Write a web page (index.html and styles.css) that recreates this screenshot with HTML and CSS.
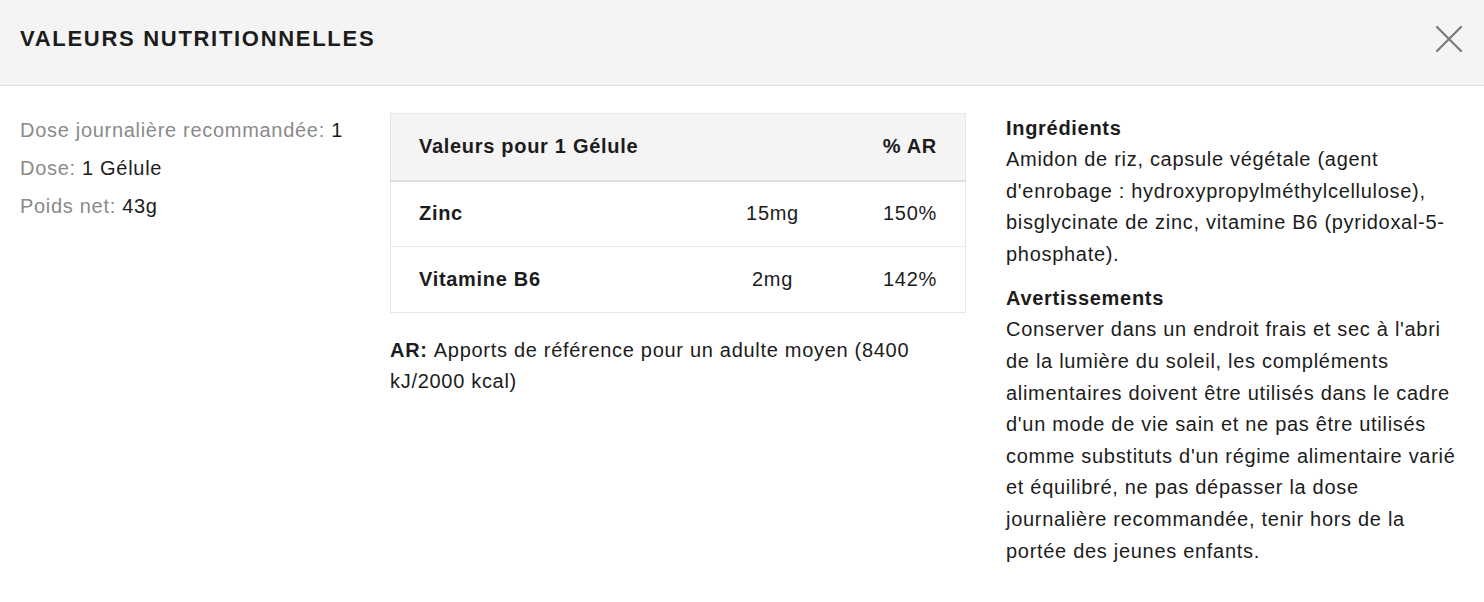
FILE: index.html
```html
<!DOCTYPE html>
<html lang="fr">
<head>
<meta charset="utf-8">
<title>Valeurs nutritionnelles</title>
<link rel="stylesheet" href="styles.css">
</head>
<body>
<div class="modal">
  <header class="modal-header">
    <h1 class="modal-title">VALEURS NUTRITIONNELLES</h1>
    <button class="close" aria-label="Fermer">
      <svg width="28" height="28" viewBox="0 0 28 28"><path d="M2 2 L26 26 M26 2 L2 26" stroke="#7a7a7a" stroke-width="2.2" fill="none" stroke-linecap="round"/></svg>
    </button>
  </header>
  <div class="modal-body">
    <div class="facts">
      <div class="fact"><span class="label">Dose journalière recommandée:</span> 1</div>
      <div class="fact"><span class="label">Dose:</span> 1 Gélule</div>
      <div class="fact"><span class="label">Poids net:</span> 43g</div>
    </div>
    <div class="nutri">
      <table class="ntable">
        <thead>
          <tr><th class="c-name">Valeurs pour 1 Gélule</th><th class="c-qty"></th><th class="c-ar">% AR</th></tr>
        </thead>
        <tbody>
          <tr><td class="c-name">Zinc</td><td class="c-qty">15mg</td><td class="c-ar">150%</td></tr>
          <tr><td class="c-name">Vitamine B6</td><td class="c-qty">2mg</td><td class="c-ar">142%</td></tr>
        </tbody>
      </table>
      <p class="note"><strong class="note-key">AR:</strong> Apports de référence pour un adulte moyen (8400 kJ/2000 kcal)</p>
    </div>
    <div class="info">
      <h2 class="info-title">Ingrédients</h2>
      <p class="info-text">Amidon de riz, capsule végétale (agent d'enrobage : hydroxypropylméthylcellulose), bisglycinate de zinc, vitamine B6 (pyridoxal-5-phosphate).</p>
      <h2 class="info-title">Avertissements</h2>
      <p class="info-text">Conserver dans un endroit frais et sec à l'abri de la lumière du soleil, les compléments alimentaires doivent être utilisés dans le cadre d'un mode de vie sain et ne pas être utilisés comme substituts d'un régime alimentaire varié et équilibré, ne pas dépasser la dose journalière recommandée, tenir hors de la portée des jeunes enfants.</p>
    </div>
  </div>
</div>
</body>
</html>
```

FILE: styles.css
```css
* { box-sizing: border-box; }
html, body { margin: 0; padding: 0; background: #fff; }
body {
  font-family: "Liberation Sans", Arial, Helvetica, sans-serif;
  color: #1c1c1c;
  font-size: 20px;
  letter-spacing: 0.7px;
}
.modal-header {
  height: 86px;
  background: #f4f4f4;
  border-bottom: 1px solid #dcdcdc;
  display: flex;
  align-items: center;
  justify-content: space-between;
  padding: 0 20px 7px;
}
.modal-title {
  margin: 0;
  font-size: 22px;
  font-weight: bold;
  color: #1c1c1c;
  letter-spacing: 1.7px;
}
.close {
  border: 0;
  background: transparent;
  padding: 0;
  width: 28px;
  height: 28px;
  margin-right: 1px;
  display: flex;
}
.modal-body {
  display: grid;
  grid-template-columns: 350px 576px 1fr;
  column-gap: 20px;
  padding: 27px 20px 20px;
}
.info { margin-left: 20px; }
.facts { margin-top: -2px; }
.fact {
  line-height: 38px;
  color: #1c1c1c;
}
.label { color: #8a8a8a; }
.ntable {
  width: 576px;
  border-collapse: collapse;
  border: 1px solid #e6e6e6;
}
.ntable th, .ntable td {
  padding: 0 28px;
  font-size: 20px;
  text-align: left;
}
.ntable thead tr {
  background: #f4f4f4;
  height: 67px;
  border-bottom: 2px solid #dedede;
}
.ntable th { font-weight: bold; }
.ntable tbody tr {
  height: 66px;
  border-bottom: 1px solid #e8e8e8;
}
.ntable td.c-name { font-weight: bold; }
.ntable .c-qty { text-align: center; width: 146px; padding: 0; }
.ntable .c-ar { text-align: right; width: 120px; }
.note {
  margin: 22px 0 0;
  line-height: 31px;
}
.note-key { margin-right: 1px; }
.info-title {
  margin: 0;
  font-size: 20px;
  font-weight: bold;
  line-height: 31px;
}
.info-text {
  margin: 0 0 13px;
  line-height: 31.6px;
}
```
